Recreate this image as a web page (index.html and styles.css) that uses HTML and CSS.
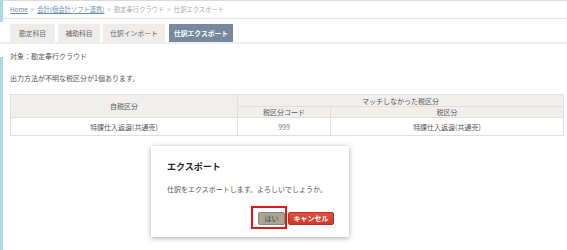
FILE: index.html
```html
<!DOCTYPE html>
<html lang="ja">
<head>
<meta charset="utf-8">
<link rel="stylesheet" href="styles.css">
</head>
<body>
<div class="crumb-wrap">
  <div class="crumb">
    <a class="crumb-link">Home</a><span class="sep">&gt;</span><a class="crumb-link">会計(個会計ソフト連携)</a><span class="sep">&gt;</span><span>勘定奉行クラウド</span><span class="sep">&gt;</span><span>仕訳エクスポート</span>
  </div>
</div>
<div class="tabs">
  <div class="tab t1">勘定科目</div>
  <div class="tab t2">補助科目</div>
  <div class="tab t3">仕訳インポート</div>
  <div class="tab t4 active">仕訳エクスポート</div>
</div>
<div class="main">
  <p class="target">対象：勘定奉行クラウド</p>
  <p class="note">出力方法が不明な税区分が1個あります。</p>
  <table class="grid">
    <colgroup><col class="c1"><col class="c2"><col class="c3"></colgroup>
    <thead>
      <tr class="h1"><th rowspan="2">自税区分</th><th colspan="2">マッチしなかった税区分</th></tr>
      <tr class="h2"><th>税区分コード</th><th>税区分</th></tr>
    </thead>
    <tbody>
      <tr class="row"><td>特課仕入返還(共通売)</td><td class="code">999</td><td>特課仕入返還(共通売)</td></tr>
    </tbody>
  </table>
</div>
<div class="modal">
  <div class="modal-title">エクスポート</div>
  <div class="modal-body">仕訳をエクスポートします。よろしいでしょうか。</div>
  <div class="modal-actions">
    <div class="highlight"><button class="btn btn-yes">はい</button></div>
    <button class="btn btn-cancel">キャンセル</button>
  </div>
</div>
</body>
</html>
```

FILE: styles.css
```css
html, body {
  margin: 0;
  padding: 0;
  background: #fff;
}
body {
  width: 567px;
  height: 250px;
  overflow: hidden;
  position: relative;
  font-family: "Noto Sans CJK JP", "Noto Sans", sans-serif;
  font-size: 7px;
  color: #555;
}
.crumb-wrap {
  height: 22px;
  border-left: 3px solid #a9d8ea;
  box-sizing: border-box;
}
.crumb {
  height: 19px;
  box-sizing: border-box;
  border-top: 1px solid #d9d9d9;
  border-bottom: 1px solid #e6e6e6;
  padding-left: 7px;
  line-height: 17px;
  font-size: 6.3px;
  color: #aaa;
  white-space: nowrap;
}
.crumb-link {
  color: #6d8db3;
  text-decoration: underline;
}
.sep {
  margin: 0 3px;
}
.tabs {
  display: flex;
  gap: 3px;
  margin-top: 2px;
  padding-left: 10px;
  border-bottom: 2px solid #eeeeee;
}
.tab {
  height: 18px;
  line-height: 18px;
  background: #efedeb;
  color: #666;
  white-space: nowrap;
  text-align: center;
  font-size: 6.8px;
}
.t1 { width: 45px; }
.t2 { width: 42px; }
.t3 { width: 62px; }
.t4 { width: 64px; margin-left: 1px; }
.tab.active {
  background: #76899f;
  color: #fff;
  font-weight: bold;
}
.main {
  position: relative;
  padding-left: 10px;
}
.main::before {
  content: "";
  position: absolute;
  left: 0;
  top: 13px;
  height: 200px;
  width: 3px;
  background: #a9d8ea;
}
.target {
  margin: 0;
  padding-top: 7px;
  line-height: 10px;
}
.note {
  margin: 12px 0 0;
  line-height: 10px;
}
.grid {
  margin-top: 11px;
  width: 553px;
  border-collapse: collapse;
  table-layout: fixed;
  border: 1px solid #e2dfdb;
}
.c1 { width: 227px; }
.c2 { width: 93px; }
.c3 { width: 233px; }
.grid th, .grid td {
  border: 1px solid #e2dfdb;
  padding: 0;
  text-align: center;
  font-weight: normal;
  color: #555;
}
.grid th {
  background: #f1efed;
}
.h1 th { height: 11px; line-height: 10px; }
.h2 th { height: 10px; line-height: 10px; }
.row td { height: 17px; background: #fff; }
.grid td.code { color: #777; }
.modal {
  position: absolute;
  left: 151px;
  top: 146px;
  width: 198px;
  height: 91px;
  box-sizing: border-box;
  background: #fff;
  box-shadow: 0 1px 5px rgba(0, 0, 0, 0.35);
  padding: 15px 15px 0 16px;
}
.modal-title {
  font-size: 9px;
  font-weight: bold;
  line-height: 12px;
  color: #222;
}
.modal-body {
  margin-top: 11px;
  line-height: 10px;
  color: #555;
}
.modal-actions {
  display: flex;
  justify-content: flex-end;
  align-items: flex-start;
  gap: 1px;
  margin-top: 12px;
}
.highlight {
  border: 2px solid #e8141b;
  padding: 4px 0 2px 5px;
}
.btn {
  display: block;
  height: 13px;
  border-radius: 2px;
  font-family: inherit;
  font-size: 7px;
  line-height: 11px;
  padding: 0;
  margin: 0;
  cursor: pointer;
}
.btn-yes {
  width: 27px;
  background: #a8a595;
  border: 1px solid #8c897a;
  color: #444;
}
.btn-cancel {
  margin-top: 6px;
  width: 46px;
  background: linear-gradient(#e05040, #cc3a2a);
  border: 1px solid #b9301f;
  color: #fff;
  font-weight: bold;
}
```
